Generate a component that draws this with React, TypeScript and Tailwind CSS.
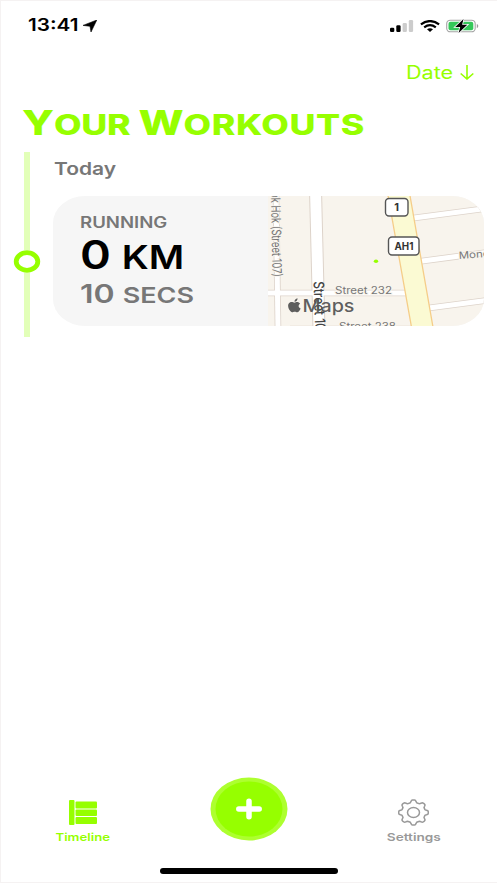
import React from 'react';

const StatusBar: React.FC = () => (
  <div className="flex h-[51px] items-center pl-[28px] pr-[18px]">
    <div className="w-[55px] text-[17px] font-semibold text-black">
      <span className="inline-block origin-left scale-x-[1.22]">13:41</span>
    </div>
    <svg className="h-[12px] w-[14px]" viewBox="0 0 14 12">
      <path d="M13.8 0 8 12 7 6.3 0 5.4Z" fill="#000" stroke="#000" strokeWidth=".6" />
    </svg>
    <div className="ml-auto flex items-center gap-[6px]">
      <svg className="h-[12px] w-[24px]" viewBox="0 0 24 12">
        <rect x="0" y="7.7" width="4.3" height="4.3" rx="1.2" fill="#000" />
        <rect x="6.3" y="5.3" width="4.3" height="6.7" rx="1.2" fill="#000" />
        <rect x="12.6" y="3" width="4.3" height="9" rx="1.2" fill="#ccc" />
        <rect x="18.8" y="0" width="4.3" height="12" rx="1.2" fill="#ccc" />
      </svg>
      <svg className="h-[12px] w-[20px]" viewBox="0 0 20 12" fill="none" stroke="#000" strokeWidth="2.2">
        <path d="M.9 4.3Q10-2.2 19.1 4.3" />
        <path d="M4.2 7.3Q10 3 15.8 7.3" />
        <path d="M7 9.3Q10 7.3 13 9.3L10 12Z" fill="#000" stroke="none" />
      </svg>
      <svg className="h-[14px] w-[33px]" viewBox="0 0 33 14">
        <rect x=".7" y="1.2" width="28.5" height="11.6" rx="3.6" fill="none" stroke="#a5a5a5" strokeWidth="1.1" />
        <rect x="2.5" y="2.8" width="24.8" height="8.4" rx="2" fill="#34c759" />
        <path d="M30.8 5v4.2q1.5-.6 1.5-2.1T30.8 5Z" fill="#999" />
        <path
          d="M17.5 0 9.2 8h5L12.6 14l8.7-8.300h-5.200Z"
          fill="#000"
          stroke="#fff"
          strokeWidth="1.600"
          paintOrder="stroke"
        />
      </svg>
    </div>
  </div>
);

const WorkoutMap: React.FC = () => (
  <svg className="block h-[130px] w-[216px]" viewBox="268 196 216 130" fontFamily="Inter, sans-serif">
    <rect x="268" y="196" width="216" height="130" fill="#f8f4ed" />
    {/* road edges first, white surface on top */}
    <g fill="none" stroke="#ddd3ca" strokeWidth="6.6">
      <path d="M276 190 278 330" />
      <path d="M260 293H410" />
      <path d="M290 329H412" />
      <path d="M410 218.500 490 208" />
      <path d="M415 262 490 252" />
      <path d="M425 308.500 490 300" />
    </g>
    <path d="M315.500 190 319 330" stroke="#ddd3ca" strokeWidth="13" />
    <g fill="none" stroke="#fff" strokeWidth="5">
      <path d="M276 190 278 330" />
      <path d="M260 293H410" />
      <path d="M290 329H412" />
      <path d="M410 218.500 490 208" />
      <path d="M415 262 490 252" />
      <path d="M425 308.500 490 300" />
    </g>
    <path d="M315.500 190 319 330" stroke="#fff" strokeWidth="11" />
    <path d="M387 190H409L433.500 330H412Z" fill="#fbfad3" stroke="#f5cd89" strokeWidth="1.300" />
    <g fill="#777" fontSize="10" stroke="#f8f4ed" strokeWidth="2" paintOrder="stroke">
      <text x="335" y="294" textLength="57" lengthAdjust="spacingAndGlyphs">Street 232</text>
      <text x="339" y="330" textLength="57" lengthAdjust="spacingAndGlyphs">Street 238</text>
      <text transform="translate(459 259) rotate(-4)" textLength="52" lengthAdjust="spacingAndGlyphs">Monorom</text>
      <text transform="translate(271 192) rotate(89)" fontSize="13" textLength="85" lengthAdjust="spacingAndGlyphs">ok Hok (Street 107)</text>
    </g>
    <text transform="translate(313.500 281.500) rotate(88)" fontSize="14.500" fontWeight="500" fill="#444" textLength="56" lengthAdjust="spacingAndGlyphs">Street 107</text>
    <g fill="#fff" stroke="#555" strokeWidth="1.400">
      <rect x="385.500" y="198.500" width="22.500" height="17.500" rx="3.500" />
      <rect x="388.500" y="237" width="30.500" height="18" rx="3.500" />
    </g>
    <g fill="#333" fontSize="11" fontWeight="700" textAnchor="middle">
      <text x="396.700" y="211">1</text>
      <text x="404" y="250" textLength="19" lengthAdjust="spacingAndGlyphs">AH1</text>
    </g>
    <ellipse cx="376" cy="261.200" rx="2.200" ry="1.800" fill="#96ff00" />
    <g fill="#555" fillOpacity=".95">
      <path transform="translate(287.500 298.800) scale(.7 .64)" d="M18 7.700c-3 1.800-2.700 6 .8 7.300-.9 2.500-2.900 5.900-5 5.900-1.300 0-1.800-.8-3.500-.8s-2.200.8-3.500.8C3.500 20.900-.3 12.800 1.200 8.600 2.600 4.800 6.200 4.500 8 5.400c1.700.9 2.200.8 3.800 0 2-.9 4.700-.3 6.200 2.300ZM10 4.500C9.800 2 11.800-.6 14.300-.9 14.700 1.900 12.500 4.500 10 4.500Z" />
      <text x="302.500" y="312" fontSize="17" fontWeight="500" textLength="52" lengthAdjust="spacingAndGlyphs">Maps</text>
    </g>
  </svg>
);

const WorkoutCard: React.FC = () => (
  <div className="flex h-[130px] w-[431px] overflow-hidden rounded-[32px/27px] bg-[#f6f6f6]">
    <div className="flex w-[215px] flex-col pl-[27px] pt-[17px] font-semibold text-[#777]">
      <div className="h-[19px] text-[15.5px] leading-[19px]">
        <span className="inline-block origin-left scale-x-[1.2] uppercase">Running</span>
      </div>
      <div className="h-[46px] whitespace-nowrap text-[39px] leading-[46px] text-black">
        <span className="inline-block origin-left scale-x-[1.2]">
          0<span className="ml-[9px] text-[32px] uppercase">km</span>
        </span>
      </div>
      <div className="h-[32px] whitespace-nowrap text-[25.5px] leading-[32px]">
        <span className="inline-block origin-left scale-x-[1.255]">
          10 <span className="text-[21.500px] uppercase">secs</span>
        </span>
      </div>
    </div>
    <WorkoutMap />
  </div>
);

const gearPath = Array.from({ length: 97 }, (_, i) => {
  const a = (i / 96) * Math.PI * 2;
  const r = 0.89 + 0.1 * Math.tanh(2.2 * Math.cos(a * 8));
  return `${i ? 'L' : 'M'}${(15.5 + 15 * r * Math.cos(a)).toFixed(2)} ${(13 + 12.6 * r * Math.sin(a)).toFixed(2)}`;
}).join('') + 'Z';

const TabBar: React.FC = () => (
  <div className="mt-auto flex h-[91px] items-start">
    <button className="flex w-[165px] flex-col items-center pt-[22px] text-[#96ff00]">
      <svg className="h-[27px] w-[30px]" viewBox="0 0 30 27" fill="currentColor">
        <rect x="1" y="1" width="5.500" height="25" rx="1" />
        <rect x="7.500" y="2.500" width="21.500" height="7" rx="1" />
        <rect x="7.500" y="10.500" width="21.500" height="6.500" rx="1" />
        <rect x="7.500" y="18" width="21.500" height="7" rx="1" />
      </svg>
      <span className="mt-[3px] scale-x-[1.2] text-[11px] font-semibold leading-[17px]">Timeline</span>
    </button>
    <button className="ml-[45px]" aria-label="Add workout">
      <svg className="block h-[64px] w-[78px]" viewBox="0 0 78 64">
        <ellipse cx="39" cy="32" rx="38.500" ry="31.500" fill="#adff2f" />
        <ellipse cx="39" cy="32" rx="33.500" ry="27.500" fill="#96ff00" />
        <path d="M39 24.300V39.700M28.800 32H49.200" fill="none" stroke="#fff" strokeWidth="5.500" strokeLinecap="round" />
      </svg>
    </button>
    <button className="ml-auto flex w-[167px] flex-col items-center pt-[22px] text-[#999]">
      <svg className="h-[27px] w-[31px]" viewBox="0 0 31 26" fill="none" stroke="currentColor" strokeWidth="1.500">
        <path d={gearPath} />
        <ellipse cx="15.500" cy="13" rx="6" ry="5" />
      </svg>
      <span className="mt-[3px] scale-x-[1.24] text-[11px] font-semibold leading-[17px]">Settings</span>
    </button>
  </div>
);

const App: React.FC = () => (
  <div className="flex h-[883px] w-[497px] flex-col overflow-hidden bg-white font-['Inter',sans-serif] shadow-[inset_1px_1px_0_#f5f2f2,inset_0_-1px_0_#f5f2f2]">
    <StatusBar />
    <div className="flex h-[43px] items-center pl-[406px] text-[#96ff00]">
      <button className="w-[54px] text-left text-[18px]">
        <span className="inline-block origin-left scale-x-[1.2]">Date</span>
      </button>
      <svg className="h-[15px] w-[14px]" viewBox="0 0 14 15" fill="none" stroke="currentColor" strokeWidth="1.600">
        <path d="M7 0V14M.7 8.500 7 14 13.300 8.500" />
      </svg>
    </div>
    <h1 className="ml-[22px] h-[58px] whitespace-nowrap text-[34px] font-extrabold leading-[57px] text-[#96ff00]">
      <span className="inline-block origin-left scale-x-[1.255]">
        Y<span className="text-[28.500px] uppercase tracking-[-0.3px]">our</span> <span className="ml-[-1px]">W</span>
        <span className="text-[28.500px] uppercase tracking-[0.4px]">orkouts</span>
      </span>
    </h1>
    <div className="flex h-[185px] pl-[13px]">
      <div className="flex w-[28px] flex-col items-center">
        <div className="h-[98px] w-[6px] bg-[#e2ffb8]" />
        <svg className="block h-[23px] w-[28px]" viewBox="0 0 28 23">
          <ellipse cx="14" cy="11.500" rx="10.800" ry="8.800" fill="#fff" stroke="#96ff00" strokeWidth="4.800" />
        </svg>
        <div className="h-[64px] w-[6px] bg-[#e2ffb8]" />
      </div>
      <div className="pl-[12px]">
        <h2 className="h-[44px] pl-[1px] text-[17.500px] font-semibold leading-[34px] text-[#777]">
          <span className="inline-block origin-left scale-x-[1.2]">Today</span>
        </h2>
        <WorkoutCard />
      </div>
    </div>
    <TabBar />
    <div className="mx-auto mb-[9px] h-[6px] w-[178px] rounded-full bg-black" />
  </div>
);

export default App;
